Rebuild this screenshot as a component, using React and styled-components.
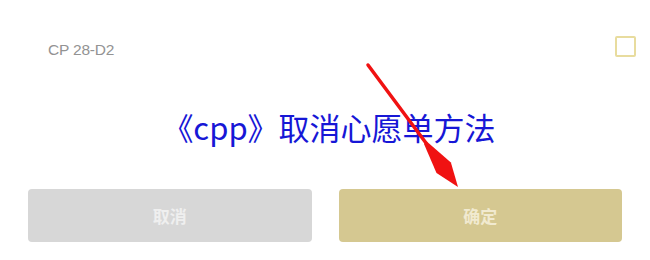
import React from "react";
import styled, { createGlobalStyle } from "styled-components";

const GlobalStyle = createGlobalStyle`
  html, body {
    margin: 0;
    padding: 0;
    background: #fff;
  }
  body {
    font-family: "Noto Sans", "Noto Sans CJK SC", sans-serif;
  }
`;

const Page = styled.div`
  position: relative;
  width: 650px;
  height: 260px;
  overflow: hidden;
  background: #fff;
`;

const ItemRow = styled.div`
  display: flex;
  align-items: center;
  justify-content: space-between;
  padding: 36px 14px 0 48px;
  height: 21px;
`;

const ItemLabel = styled.span`
  margin-top: 6px;
  font-family: "Liberation Sans", sans-serif;
  font-size: 15.5px;
  color: #939393;
  letter-spacing: -0.2px;
`;

const Check = styled.span`
  box-sizing: border-box;
  width: 21px;
  height: 21px;
  border: 2px solid #e8dc9e;
  border-radius: 2px;
`;

const Title = styled.h1`
  margin: 50px 0 0;
  text-align: center;
  font-family: "Noto Sans CJK SC", sans-serif;
  font-weight: 400;
  font-size: 31px;
  line-height: 40px;
  color: #1717d6;
  padding-left: 8px;
`;

const Actions = styled.div`
  display: flex;
  gap: 27px;
  padding: 0 28px;
  margin-top: 42px;
`;

const Button = styled.button`
  flex: 1;
  height: 53px;
  border: 0;
  border-radius: 4px;
  background: ${(p) => (p.$primary ? "#d5c891" : "#d7d7d7")};
  color: ${(p) => (p.$primary ? "#f1ead0" : "#efefef")};
  font-family: "Noto Sans CJK SC", sans-serif;
  font-weight: 700;
  font-size: 17px;
  cursor: pointer;
`;

const Arrow = styled.svg`
  position: absolute;
  left: 0;
  top: 0;
  pointer-events: none;
`;

export default function App() {
  return (
    <Page>
      <GlobalStyle />
      <ItemRow>
        <ItemLabel>CP 28-D2</ItemLabel>
        <Check />
      </ItemRow>
      <Title>《cpp》取消心愿单方法</Title>
      <Actions>
        <Button>取消</Button>
        <Button $primary>确定</Button>
      </Actions>
      <Arrow width="650" height="260" viewBox="0 0 650 260">
        <line x1="368" y1="65" x2="426" y2="143" stroke="#f01212" strokeWidth="3.5" strokeLinecap="round" />
        <polygon points="458,187 450.9,162.4 426.8,141.6 423.9,143.8 436.5,173" fill="#f01212" />
      </Arrow>
    </Page>
  );
}
